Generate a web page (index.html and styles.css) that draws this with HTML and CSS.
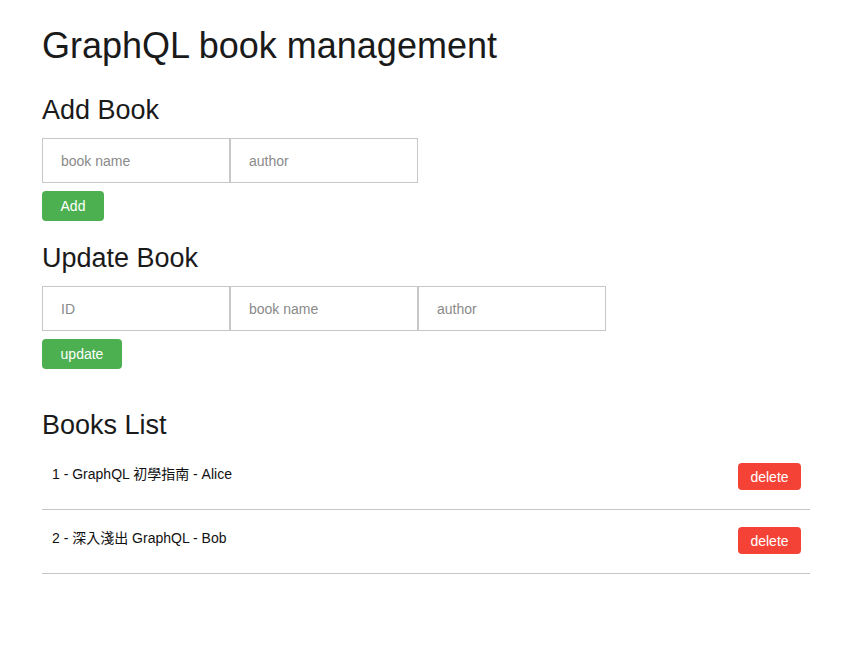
FILE: index.html
```html
<!DOCTYPE html>
<html>
<head>
<meta charset="utf-8">
<link rel="stylesheet" href="styles.css">
</head>
<body>
<div class="app">
  <h1 class="title">GraphQL book management</h1>
  <section class="block">
    <h2 class="heading">Add Book</h2>
    <div class="fields">
      <input class="field" placeholder="book name">
      <input class="field" placeholder="author">
    </div>
    <button class="btn btn-green">Add</button>
  </section>
  <section class="block">
    <h2 class="heading">Update Book</h2>
    <div class="fields">
      <input class="field" placeholder="ID">
      <input class="field" placeholder="book name">
      <input class="field" placeholder="author">
    </div>
    <button class="btn btn-green btn-update">update</button>
  </section>
  <section class="list-block">
    <h2 class="heading">Books List</h2>
    <ul class="books">
      <li class="book"><span class="book-text">1 - GraphQL 初學指南 - Alice</span><button class="btn btn-red">delete</button></li>
      <li class="book"><span class="book-text">2 - 深入淺出 GraphQL - Bob</span><button class="btn btn-red">delete</button></li>
    </ul>
  </section>
</div>
</body>
</html>
```
FILE: styles.css
```css
* { box-sizing: border-box; }
body {
  margin: 0;
  font-family: "Liberation Sans", Arial, "Noto Sans CJK TC", sans-serif;
  color: #1a1a1a;
  background: #fff;
}
.app {
  width: 768px;
  margin-left: 42px;
  padding-top: 24px;
}
.title {
  margin: 0;
  font-size: 36px;
  font-weight: 400;
  line-height: 44px;
}
.heading {
  margin: 0;
  font-size: 27px;
  font-weight: 400;
  line-height: 32px;
}
.block {
  margin-top: 26px;
}
.block + .block {
  margin-top: 21px;
}
.fields {
  display: flex;
  margin-top: 12px;
}
.field {
  width: 188px;
  height: 45px;
  border: 1px solid #c8c8c8;
  padding: 0 18px;
  font-family: inherit;
  font-size: 14px;
  color: #333;
  outline: none;
  margin: 0;
}
.field::placeholder { color: #8a8a8a; }
.btn {
  border: none;
  border-radius: 4px;
  color: #fff;
  font-family: inherit;
  font-size: 14px;
  cursor: pointer;
}
.btn-green {
  display: block;
  margin-top: 8px;
  background: #4caf50;
  width: 62px;
  height: 30px;
}
.btn-update { width: 80px; }
.list-block {
  margin-top: 40px;
}
.books {
  list-style: none;
  margin: 5px 0 0;
  padding: 0;
}
.book {
  display: flex;
  align-items: center;
  justify-content: space-between;
  height: 64px;
  padding: 0 9px 0 10px;
  border-bottom: 1px solid #c8c8c8;
  font-size: 14px;
  color: #111;
}
.book-text { margin-top: -9px; }
.btn-red {
  background: #f44336;
  width: 63px;
  height: 27px;
  margin-top: -2px;
}
```
